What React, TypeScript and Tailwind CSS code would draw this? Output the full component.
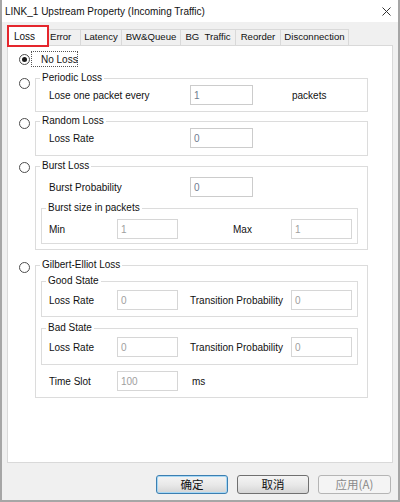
import type { ReactNode } from "react";

function Radio({ checked = false, className = "" }: { checked?: boolean; className?: string }) {
  return (
    <span
      className={`flex h-[11px] w-[11px] flex-none items-center justify-center rounded-full border border-[#4d4d4d] bg-white ${className}`}
    >
      {checked && <span className="h-[5px] w-[5px] rounded-full bg-[#1a1a1a]" />}
    </span>
  );
}

function Group({ title, className = "", children }: { title: string; className?: string; children: ReactNode }) {
  return (
    <fieldset className={`border border-[#dcdcdc] pl-[4px] ${className}`}>
      <legend className="px-[2px] leading-[14px]">{title}</legend>
      {children}
    </fieldset>
  );
}

function Field({ value, w, dim = false }: { value: string; w: string; dim?: boolean }) {
  return (
    <div
      className={`flex h-[20px] flex-none items-center border bg-white pl-[3px] ${w} ${
        dim ? "border-[#d6d6d6] text-[#a0a0a0]" : "border-[#cccccc] text-[#6f7d90]"
      }`}
    >
      {value}
    </div>
  );
}

const tabs = [
  { label: "Error", w: "w-[32px] justify-start pl-[1px]" },
  { label: "Latency", w: "w-[41px] justify-center" },
  { label: "BW&Queue", w: "w-[59px] justify-center" },
  { label: "BG\u00a0 Traffic", w: "w-[55px] justify-center" },
  { label: "Reorder", w: "w-[45px] justify-center" },
  { label: "Disconnection", w: "w-[68px] justify-center" },
];

export default function App() {
  return (
    <div className="flex h-[502px] w-[400px] flex-col border-x-2 border-b-2 border-[#a6a6a6] bg-[#f0f0f0] font-['Liberation_Sans','Noto_Sans_CJK_SC',sans-serif] text-[10px] text-[#111]">
      {/* title bar */}
      <div className="flex h-[22px] flex-none items-center justify-between bg-white pl-[3px] pr-[7px]">
        <span className="text-[10px]">LINK_1 Upstream Property (Incoming Traffic)</span>
        <svg width="9" height="9" viewBox="0 0 9 9" className="text-[#333]">
          <path d="M0.5 0.5 L8.5 8.5 M8.5 0.5 L0.5 8.5" stroke="currentColor" strokeWidth="1" />
        </svg>
      </div>

      {/* tabs */}
      <div className="flex h-[23px] flex-none items-end pl-[5px]">
        <div className="relative z-10 -mb-[2px] flex h-[22px] w-[42px] items-center border-2 border-[#e5262d] bg-white pl-[5px]">
          Loss
        </div>
        {tabs.map((t) => (
          <div
            key={t.label}
            className={`flex h-[16px] items-center whitespace-nowrap border-t border-r border-[#d9d9d9] bg-[#f0f0f0] text-[9.6px] ${t.w}`}
          >
            {t.label}
          </div>
        ))}
      </div>

      {/* panel */}
      <div className="ml-[5px] flex h-[418px] w-[386px] flex-none flex-col border border-[#d9d9d9] bg-white pl-[11px]">
        {/* no loss */}
        <div className="mt-[5px] flex h-[16px] items-center">
          <Radio checked />
          <div className="ml-[1px] flex h-[16px] w-[47px] items-center whitespace-nowrap border border-dotted border-[#555] pl-[9px]">
            No Loss
          </div>
        </div>

        {/* periodic */}
        <div className="mt-[4px] flex items-start gap-[5px]">
          <Radio className="mt-[7px]" />
          <Group title="Periodic Loss" className="w-[333px] pb-[6px]">
            <div className="ml-[9px] flex h-[20px] items-center">
              <span className="w-[141px]">Lose one packet every</span>
              <Field value="1" w="w-[63px]" />
              <span className="ml-[39px]">packets</span>
            </div>
          </Group>
        </div>

        {/* random */}
        <div className="mt-[2px] flex items-start gap-[5px]">
          <Radio className="mt-[4px]" />
          <Group title="Random Loss" className="w-[333px] pb-[7px]">
            <div className="ml-[9px] flex h-[20px] items-center">
              <span className="w-[141px]">Loss Rate</span>
              <Field value="0" w="w-[63px]" />
            </div>
          </Group>
        </div>

        {/* burst */}
        <div className="mt-[3px] flex items-start gap-[5px]">
          <Radio className="mt-[3px]" />
          <Group title="Burst Loss" className="w-[333px] pb-[5px]">
            <div className="ml-[9px] mt-[4px] flex h-[20px] items-center">
              <span className="w-[141px]">Burst Probability</span>
              <Field value="0" w="w-[63px]" />
            </div>
            <Group title="Burst size in packets" className="ml-[1px] mt-[4px] w-[317px] pb-[4px]">
              <div className="ml-[3px] mt-[4px] flex h-[20px] items-center">
                <span className="w-[68px]">Min</span>
                <Field value="1" w="w-[61px]" dim />
                <span className="ml-[55px] w-[58px]">Max</span>
                <Field value="1" w="w-[61px]" dim />
              </div>
            </Group>
          </Group>
        </div>

        {/* gilbert-elliot */}
        <div className="mt-[8px] flex items-start gap-[5px]">
          <Radio className="mt-[4px]" />
          <Group title="Gilbert-Elliot Loss" className="w-[333px] pb-[6px]">
            <Group title="Good State" className="ml-[1px] mt-[2px] w-[317px] pb-[6px]">
              <div className="ml-[3px] mt-[2px] flex h-[20px] items-center">
                <span className="w-[68px]">Loss Rate</span>
                <Field value="0" w="w-[61px]" dim />
                <span className="ml-[12px] w-[101px]">Transition Probability</span>
                <Field value="0" w="w-[61px]" dim />
              </div>
            </Group>
            <Group title="Bad State" className="ml-[1px] mt-[4px] w-[317px] pb-[7px]">
              <div className="ml-[3px] mt-[2px] flex h-[20px] items-center">
                <span className="w-[68px]">Loss Rate</span>
                <Field value="0" w="w-[61px]" dim />
                <span className="ml-[12px] w-[101px]">Transition Probability</span>
                <Field value="0" w="w-[61px]" dim />
              </div>
            </Group>
            <div className="ml-[9px] mt-[6px] flex h-[20px] items-center">
              <span className="w-[68px]">Time Slot</span>
              <Field value="100" w="w-[61px]" dim />
              <span className="ml-[14px]">ms</span>
            </div>
          </Group>
        </div>
      </div>

      {/* buttons */}
      <div className="mt-[12px] flex justify-end gap-[9px] pr-[7px] font-['Noto_Sans_CJK_SC',sans-serif] text-[11.5px]">
        <button className="flex h-[19px] w-[72px] items-center justify-center rounded-[3px] border border-[#3c7fb1] bg-linear-to-b from-[#f4f4f4] via-[#e9e9e9] to-[#d5d5d5] leading-none shadow-[inset_0_0_0_1px_#a7d8f5]">
          确定
        </button>
        <button className="flex h-[19px] w-[72px] items-center justify-center rounded-[3px] border border-[#707070] bg-linear-to-b from-[#f4f4f4] via-[#e9e9e9] to-[#d5d5d5] leading-none">
          取消
        </button>
        <button className="flex h-[19px] w-[73px] items-center justify-center rounded-[3px] border border-[#b5b5b5] bg-[#f4f4f4] leading-none text-[#8a8a8a]">
          应用(A)
        </button>
      </div>
    </div>
  );
}
